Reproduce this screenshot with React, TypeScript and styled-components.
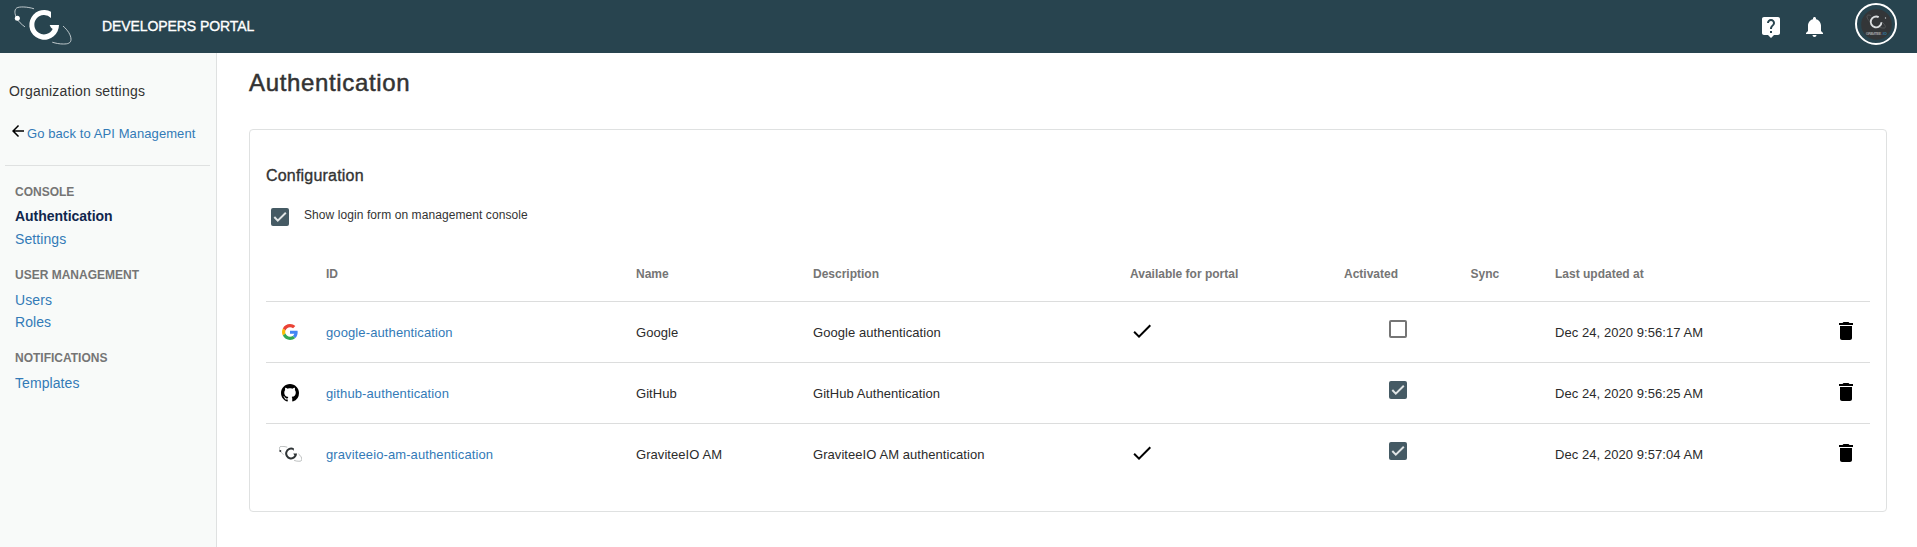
import React from "react";
import styled, { createGlobalStyle, css } from "styled-components";

const GlobalStyle = createGlobalStyle`
  *, *::before, *::after { box-sizing: border-box; }
  html, body { margin: 0; height: 100%; background: #fff; overflow: hidden; }
  body { font-family: "Liberation Sans", Helvetica, Arial, sans-serif; color: #333; }
`;

const medium = css`
  -webkit-text-stroke: 0.35px currentColor;
`;

const Page = styled.div`
  display: flex;
  flex-direction: column;
  height: 100vh;
`;

const TopBar = styled.header`
  display: flex;
  align-items: flex-start;
  height: 53px;
  flex: none;
  padding-right: 20px;
  background: #28444f;
  color: #fff;
`;

const Brand = styled.span`
  ${medium}
  margin: 16px auto 0 12px;
  font-size: 14px;
  line-height: 20px;
  letter-spacing: -0.08px;
`;

const BarIcon = styled.svg`
  width: 24px;
  height: 24px;
  margin: 15px 20px 0 0;
  fill: #fff;
`;

const Avatar = styled.div`
  width: 42px;
  height: 42px;
  margin: 3px 0 0 8px;
  border: 2px solid #fff;
  border-radius: 50%;
  overflow: hidden;
`;

const Body = styled.div`
  display: flex;
  flex: 1;
  min-height: 0;
`;

const Sidebar = styled.nav`
  width: 217px;
  flex: none;
  padding-top: 28px;
  background: #f8faf9;
  border-right: 1px solid #dfe1e1;
`;

const SidebarTitle = styled.div`
  padding-left: 9px;
  font-size: 14px;
  line-height: 20px;
  letter-spacing: 0.22px;
`;

const BackLink = styled.a`
  display: flex;
  margin: 22px 0 21px;
  padding-left: 9px;
  font-size: 13px;
  line-height: 21px;
  letter-spacing: 0.09px;
  color: #337ab7;

  svg {
    width: 18px;
    height: 18px;
    margin-top: -1px;
    fill: #000;
  }
`;

const Divider = styled.hr`
  height: 1px;
  margin: 0 6px 0 5px;
  border: 0;
  background: #dfe1e1;
`;

const Group = styled.section`
  margin-top: 16px;
  padding-left: 15px;
  display: flex;
  flex-direction: column;
  gap: 2px;
`;

const GroupTitle = styled.div`
  margin-bottom: 3px;
  font-size: 12px;
  font-weight: 700;
  line-height: 20px;
  letter-spacing: 0;
  color: #757575;
`;

const NavLink = styled.a<{ $active?: boolean }>`
  font-size: 14px;
  line-height: 20px;
  letter-spacing: 0.08px;
  color: #337ab7;
  ${(p) =>
    p.$active &&
    css`
      margin-top: -1px;
      margin-bottom: 1px;
      font-weight: 700;
      letter-spacing: -0.03px;
      color: #10264d;
    `}
`;

const Main = styled.main`
  flex: 1;
  padding: 15px 30px 0 32px;
`;

const PageTitle = styled.h1`
  margin: 0 0 32px;
  font-size: 24px;
  font-weight: 400;
  line-height: 29px;
  letter-spacing: 0.66px;
  -webkit-text-stroke: 0.5px currentColor;
`;

const Card = styled.section`
  height: 383px;
  padding: 35px 16px 0;
  border: 1px solid #dfe1e1;
  border-radius: 4px;
`;

const CardTitle = styled.h2`
  ${medium}
  margin: 0;
  font-size: 16px;
  font-weight: 400;
  line-height: 21px;
  letter-spacing: 0.2px;
`;

const Option = styled.label`
  display: flex;
  align-items: flex-start;
  height: 20px;
  margin: 19px 0 22px;
  padding: 0 0 0 5px;
  font-size: 12px;
  line-height: 20px;
  letter-spacing: 0.08px;

  > span:first-child {
    margin: 3px 15px 0 0;
  }
`;

const Box = styled.span<{ $on: boolean }>`
  display: block;
  flex: none;
  width: 18px;
  height: 18px;
  border-radius: 2px;
  border: ${(p) => (p.$on ? "0" : "2px solid #757575")};
  background: ${(p) => (p.$on ? "#455a64" : "transparent")};

  svg {
    display: block;
    width: 18px;
    height: 18px;
  }
`;

const columns = css`
  display: grid;
  grid-template-columns: 60px 310px 177px 317px 214px 126.5px 84.5px 1fr 36px;
  align-items: center;
`;

const HeadRow = styled.div`
  ${columns}
  height: 54px;
  font-size: 12px;
  font-weight: 700;
  line-height: 20px;
  color: #757575;
`;

const Row = styled.div`
  ${columns}
  height: 61px;
  border-top: 1px solid #dcdddd;
  font-size: 13px;
  line-height: 21px;
  letter-spacing: 0.06px;
  color: #2b2b2b;
`;

const IdLink = styled.a`
  letter-spacing: 0.11px;
  color: #337ab7;
`;

const ProviderIcon = styled.div`
  display: flex;
  align-items: center;
  justify-content: center;
  width: 48px;
`;

const CellIcon = styled.svg`
  display: block;
  width: 24px;
  height: 24px;
  margin-top: -2px;
  fill: #000;
`;

const Toggle = styled.div`
  padding: 0 0 7px 45px;
`;

function Checkbox({ on }: { on: boolean }) {
  return (
    <Box $on={on}>
      {on && (
        <svg viewBox="0 0 18 18">
          <polyline points="3.3,9 6.8,12.6 14.8,4.8" fill="none" stroke="#e0e4e5" strokeWidth="2" />
        </svg>
      )}
    </Box>
  );
}

interface MarkProps {
  width: number;
  height: number;
  viewBox: string;
  color: string;
  orbit: string;
  orbitWidth: number;
}

function GraviteeMark({ width, height, viewBox, color, orbit, orbitWidth }: MarkProps) {
  return (
    <svg width={width} height={height} viewBox={viewBox}>
      <g fill="none" stroke={orbit} strokeWidth={orbitWidth} strokeLinecap="round">
        <path d="M101 26C82 20 58 19 50 24C42 30 44 42 50 55C55 64 64 73 74 80" />
        <path d="M190 79C203 90 213 105 213 118C213 130 203 132 190 132C178 132 168 130 158 127" />
      </g>
      <circle cx="52" cy="55" r="7.5" fill={color} />
      <path
        fill={color}
        d="M153 35A44.500 44.500 0 1 0 177 75L149 75C151 81 154 85 158 87A29 29 0 1 1 153 54Z"
      />
    </svg>
  );
}

function GoogleIcon() {
  return (
    <svg width="16" height="16" viewBox="0 0 48 48">
      <path fill="#EA4335" d="M24 9.5c3.54 0 6.71 1.22 9.21 3.6l6.85-6.85C35.9 2.38 30.47 0 24 0 14.62 0 6.51 5.38 2.56 13.22l7.98 6.19C12.43 13.72 17.74 9.5 24 9.5z" />
      <path fill="#4285F4" d="M46.98 24.55c0-1.57-.15-3.09-.38-4.55H24v9.02h12.940c-.58 2.960-2.260 5.480-4.780 7.180l7.730 6c4.510-4.180 7.090-10.360 7.090-17.650z" />
      <path fill="#FBBC05" d="M10.530 28.590c-.48-1.450-.76-2.990-.76-4.590s.27-3.140.76-4.590l-7.980-6.190C.92 16.460 0 20.120 0 24c0 3.880.92 7.540 2.560 10.780l7.970-6.190z" />
      <path fill="#34A853" d="M24 48c6.480 0 11.930-2.130 15.890-5.810l-7.730-6c-2.150 1.450-4.920 2.300-8.160 2.300-6.260 0-11.570-4.220-13.470-9.910l-7.980 6.190C6.510 42.620 14.620 48 24 48z" />
    </svg>
  );
}

function GithubIcon() {
  return (
    <svg width="18" height="18" viewBox="0 0 16 16">
      <path d="M8 0C3.58 0 0 3.58 0 8c0 3.54 2.29 6.53 5.47 7.59.4.07.55-.17.55-.38 0-.19-.01-.82-.01-1.49-2.01.37-2.53-.49-2.69-.94-.09-.23-.48-.94-.82-1.13-.28-.15-.68-.52-.01-.53.63-.01 1.08.58 1.23.82.72 1.21 1.87.87 2.33.66.07-.52.28-.87.51-1.07-1.78-.2-3.64-.89-3.64-3.95 0-.87.31-1.590.82-2.150-.08-.2-.36-1.020.08-2.120 0 0 .67-.21 2.200.82.64-.18 1.320-.27 2-.27s1.360.09 2 .27c1.530-1.040 2.200-.82 2.200-.82.44 1.100.16 1.920.08 2.120.51.56.82 1.270.82 2.150 0 3.070-1.870 3.750-3.650 3.950.29.25.54.73.54 1.480 0 1.070-.01 1.930-.01 2.200 0 .21.15.46.55.38A8.010 8.010 0 0 0 16 8c0-4.420-3.580-8-8-8z" />
    </svg>
  );
}

const graviteeIcon = (
  <GraviteeMark width={23} height={15.5} viewBox="42 18 172 116" color="#2f3436" orbit="#8f9394" orbitWidth={4.5} />
);

const providers = [
  {
    icon: <GoogleIcon />,
    id: "google-authentication",
    name: "Google",
    description: "Google authentication",
    portal: true,
    activated: false,
    updated: "Dec 24, 2020 9:56:17 AM",
  },
  {
    icon: <GithubIcon />,
    id: "github-authentication",
    name: "GitHub",
    description: "GitHub Authentication",
    portal: false,
    activated: true,
    updated: "Dec 24, 2020 9:56:25 AM",
  },
  {
    icon: graviteeIcon,
    id: "graviteeio-am-authentication",
    name: "GraviteeIO AM",
    description: "GraviteeIO AM authentication",
    portal: true,
    activated: true,
    updated: "Dec 24, 2020 9:57:04 AM",
  },
];

export default function App() {
  return (
    <Page>
      <GlobalStyle />
      <TopBar>
        <GraviteeMark width={90} height={53} viewBox="0 0 270 159" color="#fff" orbit="#d5dcde" orbitWidth={2.6} />
        <Brand>DEVELOPERS PORTAL</Brand>
        <BarIcon viewBox="0 0 24 24">
          <path d="M19 2H5c-1.110 0-2 .9-2 2v14c0 1.100.89 2 2 2h4l3 3 3-3h4c1.100 0 2-.9 2-2V4c0-1.100-.9-2-2-2zm-6 16h-2v-2h2v2zm2.070-7.750l-.9.920C13.450 11.900 13 12.500 13 14h-2v-.5c0-1.100.45-2.100 1.170-2.830l1.240-1.260c.37-.36.59-.86.59-1.410 0-1.100-.9-2-2-2s-2 .9-2 2H8c0-2.210 1.790-4 4-4s4 1.790 4 4c0 .88-.36 1.680-.93 2.250z" />
        </BarIcon>
        <BarIcon viewBox="0 0 24 24">
          <path d="M11.500 22c1.100 0 2-.9 2-2h-4c0 1.100.9 2 2 2zm6.500-6v-5.500c0-3.070-2.130-5.640-5-6.320V3.500c0-.83-.67-1.500-1.500-1.500S10 2.670 10 3.500v.68c-2.870.68-5 3.250-5 6.320V16l-2 2v1h17v-1l-2-2z" />
        </BarIcon>
        <Avatar>
          <svg width="38" height="38" viewBox="0 0 38 38">
            <circle cx="19.500" cy="19.500" r="15.300" fill="#333638" />
            <g fill="none" stroke="#606466" strokeWidth="0.7">
              <path d="M14 10.500C11 9.500 9.500 10 10 12C10.300 14 12 15.500 13.500 17" />
              <path d="M26 18C28.500 20.500 29 22.500 27.500 23C26 23.200 24.500 23 23 22.500" />
            </g>
            <path d="M21.700 12.200A5.400 5.400 0 1 0 24.500 17.200" fill="none" stroke="#d9dcdd" strokeWidth="1.900" />
            <circle cx="28.500" cy="13" r="0.7" fill="#c4c8ca" />
            <text x="8.700" y="29.600" fontSize="4" fontWeight="700" textLength="15.500" fill="#9a9d9f">
              GRAVITEE
            </text>
            <text x="24.600" y="29.600" fontSize="4" fontWeight="700" textLength="5.200" fill="#2f7fae">
              .IO
            </text>
          </svg>
        </Avatar>
      </TopBar>
      <Body>
        <Sidebar>
          <SidebarTitle>Organization settings</SidebarTitle>
          <BackLink>
            <svg viewBox="0 0 24 24">
              <path d="M20 11H7.830l5.590-5.590L12 4l-8 8 8 8 1.410-1.410L7.830 13H20v-2z" />
            </svg>
            Go back to API Management
          </BackLink>
          <Divider />
          <Group>
            <GroupTitle>CONSOLE</GroupTitle>
            <NavLink $active>Authentication</NavLink>
            <NavLink>Settings</NavLink>
          </Group>
          <Group>
            <GroupTitle>USER MANAGEMENT</GroupTitle>
            <NavLink>Users</NavLink>
            <NavLink>Roles</NavLink>
          </Group>
          <Group>
            <GroupTitle>NOTIFICATIONS</GroupTitle>
            <NavLink>Templates</NavLink>
          </Group>
        </Sidebar>
        <Main>
          <PageTitle>Authentication</PageTitle>
          <Card>
            <CardTitle>Configuration</CardTitle>
            <Option>
              <Checkbox on />
              <span>Show login form on management console</span>
            </Option>
            <HeadRow>
              <span />
              <span>ID</span>
              <span>Name</span>
              <span>Description</span>
              <span>Available for portal</span>
              <span>Activated</span>
              <span>Sync</span>
              <span>Last updated at</span>
            </HeadRow>
            {providers.map((p) => (
              <Row key={p.id}>
                <ProviderIcon>{p.icon}</ProviderIcon>
                <IdLink>{p.id}</IdLink>
                <span>{p.name}</span>
                <span>{p.description}</span>
                <span>
                  {p.portal && (
                    <CellIcon viewBox="0 0 24 24">
                      <path d="M9 16.170L4.830 12l-1.420 1.410L9 19 21 7l-1.410-1.410z" />
                    </CellIcon>
                  )}
                </span>
                <Toggle>
                  <Checkbox on={p.activated} />
                </Toggle>
                <span />
                <span>{p.updated}</span>
                <CellIcon viewBox="0 0 24 24">
                  <path d="M6 19c0 1.100.9 2 2 2h8c1.100 0 2-.9 2-2V7H6v12zM19 4h-3.500l-1-1h-5l-1 1H5v2h14V4z" />
                </CellIcon>
              </Row>
            ))}
          </Card>
        </Main>
      </Body>
    </Page>
  );
}
